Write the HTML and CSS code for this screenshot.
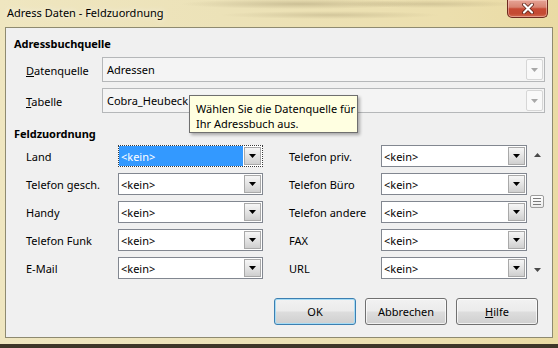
FILE: index.html
```html
<!DOCTYPE html>
<html lang="de">
<head>
<meta charset="utf-8">
<title>Adress Daten - Feldzuordnung</title>
<link rel="stylesheet" href="styles.css">
</head>
<body>
<div class="window">
  <div class="titlebar">
    <span class="title">Adress Daten - Feldzuordnung</span>
    <div class="close">
      <svg width="14" height="11" viewBox="0 0 14 11"><path d="M3 1.5 L11 9.5 M11 1.5 L3 9.5" stroke="#5b2015" stroke-width="3.8" stroke-linecap="round"/><path d="M3 1.5 L11 9.5 M11 1.5 L3 9.5" stroke="#ffffff" stroke-width="2.2" stroke-linecap="round"/></svg>
    </div>
  </div>
  <div class="dialog">
    <div class="heading">Adressbuchquelle</div>
    <div class="src-row">
      <span class="src-label"><u>D</u>atenquelle</span>
      <div class="src-combo">
        <span class="src-value">Adressen</span>
        <span class="src-btn"><svg width="7" height="4" viewBox="0 0 7 4"><polygon points="0,0 7,0 3.5,4" fill="#a8a8a8"/></svg></span>
      </div>
    </div>
    <div class="src-row second">
      <span class="src-label"><u>T</u>abelle</span>
      <div class="src-combo">
        <span class="src-value">Cobra_Heubeck</span>
        <span class="src-btn"><svg width="7" height="4" viewBox="0 0 7 4"><polygon points="0,0 7,0 3.5,4" fill="#a8a8a8"/></svg></span>
      </div>
    </div>
    <div class="heading heading-fields">Feldzuordnung</div>
    <div class="fields">
      <div class="scroll">
        <svg class="arrow-up" width="7" height="4" viewBox="0 0 7 4"><polygon points="0,4 7,4 3.5,0" fill="#4a4a4a"/></svg>
        <div class="thumb"><span></span><span></span><span></span></div>
        <svg class="arrow-down" width="7" height="4" viewBox="0 0 7 4"><polygon points="0,0 7,0 3.5,4" fill="#4a4a4a"/></svg>
      </div>

      <span class="flabel">Land</span>
      <div class="combo focused"><span class="value">&lt;kein&gt;</span><span class="drop"><svg width="7" height="4" viewBox="0 0 7 4"><polygon points="0,0 7,0 3.5,4" fill="#000"/></svg></span></div>
      <span class="flabel right">Telefon priv.</span>
      <div class="combo"><span class="value">&lt;kein&gt;</span><span class="drop"><svg width="7" height="4" viewBox="0 0 7 4"><polygon points="0,0 7,0 3.5,4" fill="#000"/></svg></span></div>

      <span class="flabel">Telefon gesch.</span>
      <div class="combo"><span class="value">&lt;kein&gt;</span><span class="drop"><svg width="7" height="4" viewBox="0 0 7 4"><polygon points="0,0 7,0 3.5,4" fill="#000"/></svg></span></div>
      <span class="flabel right">Telefon Büro</span>
      <div class="combo"><span class="value">&lt;kein&gt;</span><span class="drop"><svg width="7" height="4" viewBox="0 0 7 4"><polygon points="0,0 7,0 3.5,4" fill="#000"/></svg></span></div>

      <span class="flabel">Handy</span>
      <div class="combo"><span class="value">&lt;kein&gt;</span><span class="drop"><svg width="7" height="4" viewBox="0 0 7 4"><polygon points="0,0 7,0 3.5,4" fill="#000"/></svg></span></div>
      <span class="flabel right">Telefon andere</span>
      <div class="combo"><span class="value">&lt;kein&gt;</span><span class="drop"><svg width="7" height="4" viewBox="0 0 7 4"><polygon points="0,0 7,0 3.5,4" fill="#000"/></svg></span></div>

      <span class="flabel">Telefon Funk</span>
      <div class="combo"><span class="value">&lt;kein&gt;</span><span class="drop"><svg width="7" height="4" viewBox="0 0 7 4"><polygon points="0,0 7,0 3.5,4" fill="#000"/></svg></span></div>
      <span class="flabel right">FAX</span>
      <div class="combo"><span class="value">&lt;kein&gt;</span><span class="drop"><svg width="7" height="4" viewBox="0 0 7 4"><polygon points="0,0 7,0 3.5,4" fill="#000"/></svg></span></div>

      <span class="flabel">E-Mail</span>
      <div class="combo"><span class="value">&lt;kein&gt;</span><span class="drop"><svg width="7" height="4" viewBox="0 0 7 4"><polygon points="0,0 7,0 3.5,4" fill="#000"/></svg></span></div>
      <span class="flabel right">URL</span>
      <div class="combo"><span class="value">&lt;kein&gt;</span><span class="drop"><svg width="7" height="4" viewBox="0 0 7 4"><polygon points="0,0 7,0 3.5,4" fill="#000"/></svg></span></div>
    </div>
    <div class="buttons">
      <button class="btn default">OK</button>
      <button class="btn">Abbrechen</button>
      <button class="btn"><u>H</u>ilfe</button>
    </div>
  </div>
  <div class="bottom-edge"></div>
  <div class="tooltip">Wählen Sie die Datenquelle für<br>Ihr Adressbuch aus.</div>
</div>
</body>
</html>
```

FILE: styles.css
```css
* { box-sizing: border-box; }
html, body { margin: 0; padding: 0; }
body {
  width: 558px;
  height: 348px;
  overflow: hidden;
  font-family: "Noto Sans", "Open Sans", sans-serif;
  font-size: 11px;
  color: #000;
}
.window {
  position: relative;
  width: 558px;
  height: 348px;
  display: flex;
  flex-direction: column;
  background:
    radial-gradient(ellipse 120px 5px at 300px 4px, rgba(120,105,70,0.28), transparent),
    radial-gradient(ellipse 90px 4px at 430px 4px, rgba(120,105,70,0.22), transparent),
    radial-gradient(ellipse 110px 4px at 330px 15px, rgba(120,105,70,0.22), transparent),
    linear-gradient(90deg, #efe6c0 0%, #ece2b8 40%, #ecdfae 80%, #eadba4 100%);
}
.titlebar {
  height: 27px;
  flex: none;
  display: flex;
  justify-content: space-between;
  align-items: flex-start;
  padding-left: 7px;
  padding-right: 10px;
}
.title {
  margin-top: 5px;
  line-height: 16px;
  font-size: 11px;
  text-shadow: 0 0 6px rgba(255,255,255,0.9);
}
.close {
  width: 41px;
  height: 18px;
  display: flex;
  align-items: center;
  justify-content: center;
  border: 1px solid #6e2a1f;
  border-top: none;
  border-radius: 0 0 5px 5px;
  background: linear-gradient(180deg, #e6a496 0%, #d88472 42%, #c74a34 52%, #c44a33 80%, #d26a50 100%);
  box-shadow: inset 0 0 0 1px rgba(255,220,210,0.45);
}
.close svg { display: block; }
.dialog {
  flex: none;
  margin: 0 5px;
  height: 311px;
  background: #f0f0f0;
  border: 1px solid #8e8a70;
  padding: 8px 7px 12px 8px;
  display: flex;
  flex-direction: column;
}
.heading {
  font-weight: bold;
  line-height: 16px;
  letter-spacing: -0.05px;
}
.heading-fields { margin-top: 13px; }
.src-row {
  margin-top: 5px;
  height: 25px;
  display: flex;
  align-items: center;
  padding-left: 12px;
}
.src-row.second { margin-top: 6px; }
.src-label { width: 76px; flex: none; padding-top: 1px; }
.src-combo {
  flex: 1;
  height: 25px;
  display: flex;
  align-items: stretch;
  border: 1px solid #b5b7b9;
  background: #f4f4f4;
  padding: 1px;
}
.src-value {
  flex: 1;
  padding-left: 3px;
  padding-top: 1px;
  line-height: 20px;
}
.src-btn {
  width: 17px;
  flex: none;
  display: flex;
  align-items: center;
  justify-content: center;
  border: 1px solid #d6d6d6;
  background: #f9f9f9;
  border-radius: 2px;
}
.src-btn svg { display: block; }
.fields {
  margin-top: 3px;
  padding-left: 12px;
  display: grid;
  grid-template-columns: 92px 145px 118px 146px 18px;
  grid-template-rows: repeat(5, 22px);
  row-gap: 6px;
}
.flabel {
  padding-top: 1px;
  line-height: 21px;
  white-space: nowrap;
}
.flabel.right { padding-left: 26px; }
.combo {
  height: 22px;
  display: flex;
  border: 1px solid #828790;
  background: #fff;
}
.combo .value {
  flex: 1;
  padding-left: 2px;
  padding-top: 1px;
  line-height: 19px;
}
.combo.focused { border: 1px dotted #3a3a3a; }
.combo.focused .value {
  background: #3399ff;
  color: #fff;
}
.drop {
  width: 17px;
  flex: none;
  margin: 1px;
  display: flex;
  align-items: center;
  justify-content: center;
  border: 1px solid #a9a9a9;
  background: linear-gradient(180deg, #f6f6f6 0%, #e4e4e4 50%, #cfcfcf 100%);
}
.drop svg { display: block; }
.scroll {
  grid-column: 5;
  grid-row: 1 / 6;
  display: flex;
  flex-direction: column;
  align-items: center;
  padding-left: 2px;
}
.scroll svg { display: block; flex: none; }
.arrow-up { margin-top: 8px; }
.thumb {
  margin-top: 38px;
  width: 14px;
  height: 13px;
  border: 1px solid #9c9c9c;
  border-radius: 2px;
  background: linear-gradient(180deg, #ffffff, #ececec);
  display: flex;
  flex-direction: column;
  align-items: center;
  justify-content: center;
  gap: 2px;
}
.thumb span {
  display: block;
  width: 8px;
  height: 1px;
  background: #7a7a7a;
}
.arrow-down { margin-top: auto; margin-bottom: 7px; }
.buttons {
  margin-top: 19px;
  display: flex;
  justify-content: flex-end;
  gap: 9px;
  padding-right: 7px;
}
.btn {
  width: 82px;
  height: 27px;
  font-family: "Noto Sans", "Open Sans", sans-serif;
  font-size: 11px;
  color: #000;
  border: 1px solid #707070;
  border-radius: 3px;
  background: linear-gradient(180deg, #f2f2f2 0%, #ebebeb 48%, #dddddd 52%, #cfcfcf 100%);
  box-shadow: inset 0 0 0 1px rgba(255,255,255,0.7);
  padding: 0;
}
.btn.default {
  border-color: #3c7fb1;
  box-shadow: inset 0 0 0 1px #a6dcf5;
}
.bottom-edge {
  margin-top: auto;
  height: 4px;
  background: #3e3628;
}
.tooltip {
  position: absolute;
  left: 189px;
  top: 95px;
  width: 169px;
  height: 38px;
  padding: 5px 0 0 6px;
  border: 1px solid #6f6f6f;
  background: #ffffe1;
  line-height: 15px;
  white-space: nowrap;
  box-shadow: 2px 2px 3px rgba(0,0,0,0.3);
}
```
